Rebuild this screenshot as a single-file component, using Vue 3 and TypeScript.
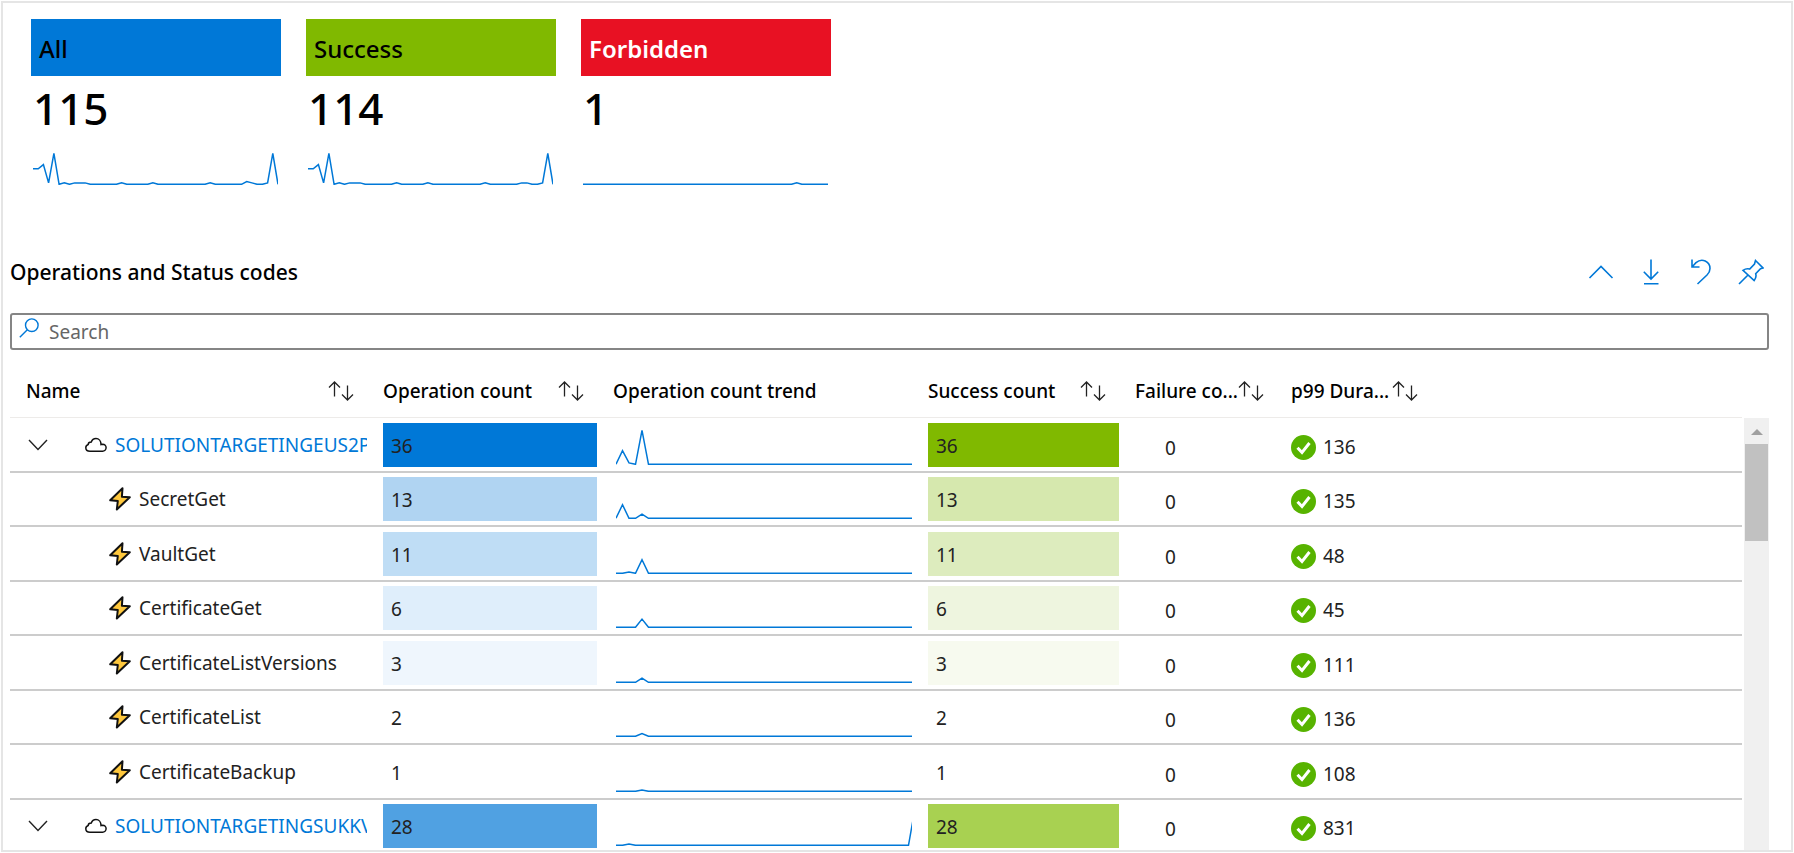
<script setup lang="ts">
interface Tile { label: string; value: number; tone: string; trend: number[] }
interface Row { name: string; group: boolean; ops: number; opsFill: string; okFill: string; trend: number[]; p99: number }

/** Builds a series of `length` zeroes with a few named samples filled in. */
function series(length: number, samples: Record<number, number>): number[] {
  return Array.from({ length }, (_, i) => samples[i] ?? 0)
}

/** Turns a series into polyline points inside a width x height box. */
function points(values: number[], width: number, height: number, max: number): string {
  const step = width / (values.length - 1)
  return values.map((v, i) => `${(i * step).toFixed(1)},${(height - (v / max) * (height - 2) - 0.7).toFixed(1)}`).join(' ')
}

const shared = { 0: 11, 1: 11, 2: 14, 3: 1, 4: 22, 6: 1, 8: 1, 9: 1, 10: 1, 17: 1, 23: 1, 34: 1, 45: 1, 46: 22 }

const tiles: Tile[] = [
  { label: 'All', value: 115, tone: 'all', trend: series(48, { ...shared, 41: 2, 42: 1 }) },
  { label: 'Success', value: 114, tone: 'success', trend: series(48, { ...shared, 41: 1, 42: 1 }) },
  { label: 'Forbidden', value: 1, tone: 'forbidden', trend: series(48, { 41: 1 }) },
]

const rows: Row[] = [
  { name: 'SOLUTIONTARGETINGEUS2PROD', group: true, ops: 36, opsFill: '#0078d7', okFill: '#80b900', trend: series(47, { 1: 10, 2: 1, 4: 25 }), p99: 136 },
  { name: 'SecretGet', group: false, ops: 13, opsFill: '#b0d4f2', okFill: '#d6e8ae', trend: series(47, { 1: 10, 4: 3 }), p99: 135 },
  { name: 'VaultGet', group: false, ops: 11, opsFill: '#bfddf5', okFill: '#ddecbe', trend: series(47, { 2: 1, 4: 10 }), p99: 48 },
  { name: 'CertificateGet', group: false, ops: 6, opsFill: '#dfeefb', okFill: '#eef5df', trend: series(47, { 4: 6 }), p99: 45 },
  { name: 'CertificateListVersions', group: false, ops: 3, opsFill: '#eff6fd', okFill: '#f7faef', trend: series(47, { 4: 3 }), p99: 111 },
  { name: 'CertificateList', group: false, ops: 2, opsFill: 'transparent', okFill: 'transparent', trend: series(47, { 4: 2 }), p99: 136 },
  { name: 'CertificateBackup', group: false, ops: 1, opsFill: 'transparent', okFill: 'transparent', trend: series(47, { 4: 1 }), p99: 108 },
  { name: 'SOLUTIONTARGETINGSUKKVPROD', group: true, ops: 28, opsFill: '#50a1e2', okFill: '#a8d151', trend: series(47, { 2: 1, 46: 27 }), p99: 831 },
]

const columns = [
  { key: 'name', label: 'Name', sortable: true },
  { key: 'ops', label: 'Operation count', sortable: true },
  { key: 'trend', label: 'Operation count trend', sortable: false },
  { key: 'ok', label: 'Success count', sortable: true },
  { key: 'fail', label: 'Failure co...', sortable: true },
  { key: 'p99', label: 'p99 Dura...', sortable: true },
]
</script>

<template>
  <main class="frame">
    <section class="tiles" aria-label="Totals">
      <article v-for="tile in tiles" :key="tile.label" class="tile">
        <h2 class="tile-label" :class="tile.tone">{{ tile.label }}</h2>
        <p class="tile-value">{{ tile.value }}</p>
        <svg class="tile-trend" viewBox="0 0 245 33" aria-hidden="true">
          <polyline class="spark" :points="points(tile.trend, 245, 33, 22)" />
        </svg>
      </article>
    </section>

    <header class="bar">
      <h1 class="title">Operations and Status codes</h1>
      <div class="tools">
        <button type="button" class="tool" aria-label="Collapse">
          <svg viewBox="0 0 26 26"><path d="M1.500 19 13 7.500 24.500 19" /></svg>
        </button>
        <button type="button" class="tool" aria-label="Download">
          <svg viewBox="0 0 26 26"><path d="M13 .5v19.500M5.800 12.800 13 20l7.200-7.200M6 24.800h14.500" /></svg>
        </button>
        <button type="button" class="tool" aria-label="Undo">
          <svg viewBox="0 0 26 26"><path d="M4 .5v7.500h7.500M4 8l4-4.300C14-1.500 22 2.500 22 9.500c0 2.700-1.200 4.700-3 6.500l-9.500 9" /></svg>
        </button>
        <button type="button" class="tool" aria-label="Pin">
          <svg viewBox="0 0 26 26"><path d="M17.500 1.500 25 9l-2.500.800-4.800 4.900c.800 2.600.200 4.700-1.500 6.800L5 11.300c2.300-1.600 4.300-2 6.700-1.300l4.800-5zM9.500 16.500 1 25" /></svg>
        </button>
      </div>
    </header>

    <div class="search">
      <svg class="search-icon" viewBox="0 0 20 20" aria-hidden="true"><circle cx="12.800" cy="7.200" r="6.300" /><path d="M8.300 11.700.8 19.200" /></svg>
      <input type="search" placeholder="Search" aria-label="Search operations" />
    </div>

    <div class="grid">
      <div class="table-area">
        <table>
          <colgroup>
            <col v-for="c in columns" :key="c.key" :class="'col-' + c.key" />
            <col />
          </colgroup>
          <thead>
            <tr>
              <th v-for="c in columns" :key="c.key" scope="col" :class="'head-' + c.key">
                <div class="head">
                  <span>{{ c.label }}</span>
                  <button v-if="c.sortable" type="button" class="sort" :aria-label="'Sort by ' + c.label">
                    <svg viewBox="0 0 26 20"><path d="M6.500 15.500V1M1 6.500 6.500 1 12 6.500M19.500 4.500V19M14 13.500l5.500 5.500 5.500-5.500" /></svg>
                  </button>
                </div>
              </th>
              <td></td>
            </tr>
          </thead>
          <tbody>
            <tr v-for="row in rows" :key="row.name">
              <td>
                <div v-if="row.group" class="name group">
                  <button type="button" class="expander" aria-label="Collapse group" aria-expanded="true">
                    <svg viewBox="0 0 20 12"><path d="M1 1l9 9.500L19 1" /></svg>
                  </button>
                  <svg class="cloud" viewBox="0 0 22 16" aria-hidden="true"><path d="M5 14.200h12.500a3.500 3.500 0 0 0 .200-7c-.700 0-1.200.1-1.700.3C16 4 13.800 1.500 11 1.500c-2.300 0-4 1.300-4.700 3.500C4 5 3.200 6 3.200 7.500 1.800 8 .8 9.200.8 10.700c0 2 1.700 3.500 4.200 3.500z" /></svg>
                  <a href="#">{{ row.name }}</a>
                </div>
                <div v-else class="name leaf">
                  <svg class="bolt" viewBox="0 0 22 24" aria-hidden="true"><path d="M13.500 1.200 1.200 13.200l7.600.8L7.800 22.500 20.800 10.200l-7.900-.4z" /></svg>
                  <span>{{ row.name }}</span>
                </div>
              </td>
              <td><div class="heat" :style="{ background: row.opsFill }">{{ row.ops }}</div></td>
              <td>
                <svg class="row-trend" viewBox="0 0 296 36" aria-hidden="true">
                  <polyline class="spark" :points="points(row.trend, 299, 36, 25)" />
                </svg>
              </td>
              <td><div class="heat" :style="{ background: row.okFill }">{{ row.ops }}</div></td>
              <td><div class="fail">0</div></td>
              <td>
                <div class="p99">
                  <svg class="tick" viewBox="0 0 25 25" aria-hidden="true"><circle cx="12.500" cy="12.500" r="12.500" /><path d="M6.500 12.800l4.500 4.700 7.500-9.500" /></svg>
                  <span>{{ row.p99 }}</span>
                </div>
              </td>
              <td></td>
            </tr>
          </tbody>
        </table>
      </div>
      <div class="scrollbar" aria-hidden="true">
        <svg class="scroll-up" viewBox="0 0 12 6"><path d="M0 6 6 0l6 6z" /></svg>
        <div class="thumb"></div>
      </div>
    </div>
  </main>
</template>

<style>
body { background: #fff; }
</style>

<style scoped>
* { box-sizing: border-box; }

.frame {
  display: flex;
  flex-direction: column;
  height: calc(100vh - 2px);
  margin: 1px;
  border: 2px solid #e5e5e5;
  overflow: hidden;
  font-family: "Noto Sans", "Open Sans", sans-serif;
  font-size: 19px;
  line-height: 24px;
  color: #222;
}

button { padding: 0; border: 0; background: none; cursor: pointer; }
svg { display: block; fill: none; }
h1, h2, p { margin: 0; }
.spark { stroke: #0078d7; stroke-width: 1.5; }

.tiles { display: flex; gap: 25px; padding: 16px 28px 0; }
.tile { width: 250px; }
.tile-label { height: 57px; padding: 0 8px; font-size: 24px; font-weight: 500; line-height: 60px; color: #000; }
.all { background: #0078d7; }
.success { background: #80b900; }
.forbidden { background: #e81123; color: #fff; font-weight: 600; }
.tile-value { padding: 0 2px; font-size: 44px; font-weight: 500; line-height: 64px; color: #000; }
.tile-trend { width: 245px; height: 33px; margin: 12px 0 0 2px; }

.bar { display: flex; align-items: center; justify-content: space-between; margin-top: 71px; padding: 0 27px 0 7px; height: 32px; }
.title { font-size: 21px; font-weight: 500; color: #000; }
.tools { display: flex; gap: 24px; }
.tool svg { width: 26px; height: 26px; stroke: #0078d7; stroke-width: 1.6; }

.search { display: flex; gap: 10px; height: 37px; margin: 25px 22px 0 7px; padding: 0 7px; border: 2px solid #858585; border-radius: 3px; }
.search-icon { width: 20px; height: 20px; margin-top: 3px; stroke: #0078d7; stroke-width: 1.4; }
.search input { flex: 1; min-width: 0; padding: 0; border: 0; outline: 0; background: none; font: inherit; color: #222; }
.search input::placeholder { color: #666; opacity: 1; }

.grid { display: flex; flex: 1; gap: 2px; min-height: 0; margin: 15px 22px 0 7px; overflow: hidden; }
.table-area { flex: 1; min-width: 0; overflow: hidden; }
table { width: 100%; table-layout: fixed; border-collapse: separate; border-spacing: 0; }
.col-name { width: 365px; }
.col-ops { width: 230px; }
.col-trend { width: 315px; }
.col-ok { width: 207px; }
.col-fail, .col-p99 { width: 156px; }

th, td { padding: 0 8px; text-align: left; }
thead th, thead td { height: 53px; border-bottom: 1px solid #edebe9; font-weight: 500; color: #000; }
.head-name { padding-left: 16px; }
.head { display: flex; align-items: center; justify-content: space-between; padding-right: 13px; white-space: nowrap; }
.sort svg { width: 26px; height: 20px; stroke: #222; stroke-width: 1.3; }

tbody td { height: 54px; padding-bottom: 4px; border-bottom: 2px solid #ccc; vertical-align: bottom; }
tbody tr:nth-child(odd) td { height: 55px; }
.name { display: flex; align-items: center; height: 44px; overflow: hidden; white-space: nowrap; }
.group { padding-left: 10px; }
.leaf { gap: 8px; padding-left: 91px; }
.expander svg { width: 20px; height: 12px; stroke: #222; stroke-width: 1.4; }
.cloud { flex: none; width: 22px; height: 16px; margin: 0 8px 0 37px; stroke: #111; stroke-width: 1.5; }
.bolt { flex: none; width: 22px; height: 24px; fill: #ffc83d; stroke: #111; stroke-width: 2; stroke-linejoin: round; }
a { color: #0078d7; text-decoration: none; }
.heat { height: 44px; padding: 0 8px; line-height: 46px; }
.row-trend { width: 296px; height: 36px; margin: 0 0 2px 3px; }
.fail { height: 44px; padding-left: 30px; line-height: 50px; }
.p99 { display: flex; align-items: center; gap: 7px; height: 44px; padding-top: 4px; }
.tick { width: 25px; height: 25px; fill: #57b300; }
.tick path { fill: none; stroke: #fff; stroke-width: 3; }

.scrollbar { display: flex; flex-direction: column; align-items: center; width: 25px; margin-top: 53px; padding: 11px 1px 0; background: #f0f0f0; }
.scroll-up { width: 12px; height: 6px; fill: #a0a0a0; }
.thumb { width: 100%; height: 97px; margin-top: 9px; background: #c1c1c1; }
</style>
